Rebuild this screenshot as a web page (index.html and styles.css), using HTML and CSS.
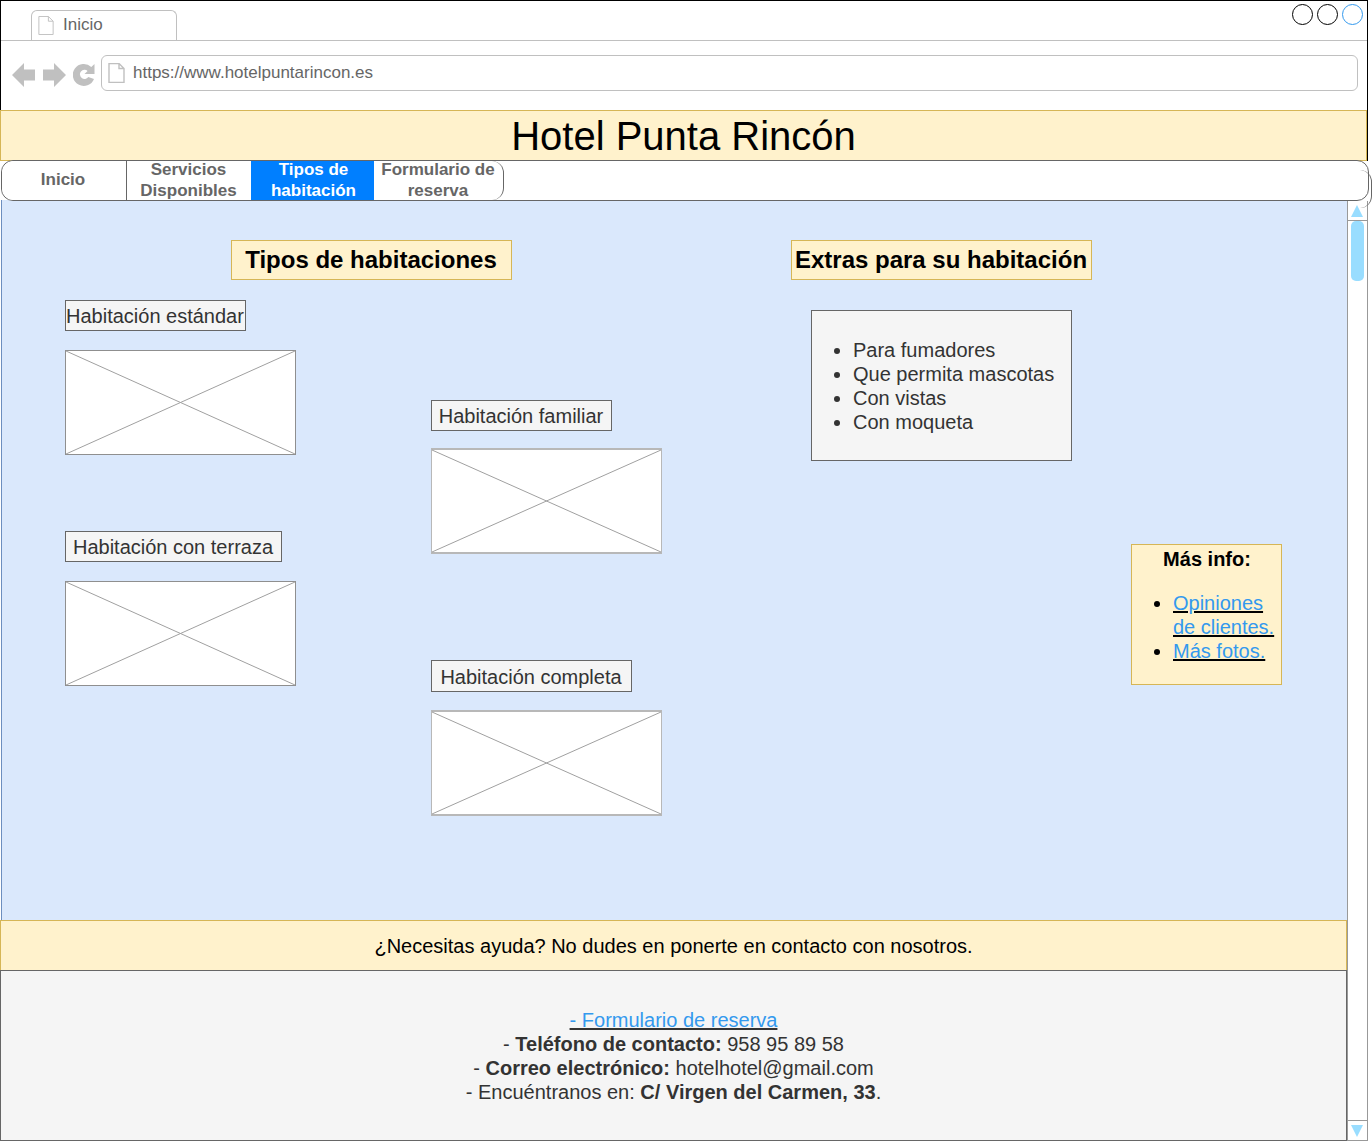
FILE: index.html
```html
<!DOCTYPE html>
<html lang="es">
<head>
<meta charset="utf-8">
<title>Hotel Punta Rincón</title>
<link rel="stylesheet" href="styles.css">
</head>
<body>
<div class="window">
  <div class="chrome">
    <div class="tabbar">
      <div class="tab">
        <svg class="page-icon" viewBox="0 0 16 20"><path d="M.5.5H10.5L15.5 5.5V19.5H.5Z M10.5.5V5.5H15.5"/></svg>
        <span class="tab-text">Inicio</span>
      </div>
      <div class="win-buttons">
        <span class="win-btn"></span><span class="win-btn"></span><span class="win-btn win-btn-active"></span>
      </div>
    </div>
    <div class="addressbar">
      <div class="nav-icons">
        <svg class="nav-icon" viewBox="0 0 23 24"><path d="M0 12L12 0V6.500H23V17.500H12V24Z"/></svg>
        <svg class="nav-icon" viewBox="0 0 23 24"><path d="M23 12L11 0V6.500H0V17.500H11V24Z"/></svg>
        <svg class="nav-icon nav-icon-reload" viewBox="0 0 22 23"><path d="M21.500 1V11H11.500L14.600 7.900A4.600 4.600 0 1 0 15.300 14L21 16A11 11 0 1 1 18.300 3.900Z"/></svg>
      </div>
      <div class="url">
        <svg class="page-icon url-icon" viewBox="0 0 16 20"><path d="M.5.5H10.5L15.5 5.5V19.5H.5Z M10.5.5V5.5H15.5"/></svg>
        <span>https://www.hotelpuntarincon.es</span>
      </div>
    </div>
  </div>
  <div class="title-row">
    <h1 class="title">Hotel Punta Rincón</h1>
  </div>
  <nav class="menu">
    <a class="menu-item menu-first">Inicio</a>
    <a class="menu-item menu-second">Servicios Disponibles</a>
    <a class="menu-item menu-active">Tipos de habitación</a>
    <a class="menu-item menu-last">Formulario de reserva</a>
  </nav>
  <div class="body-row">
    <div class="page">
      <main class="canvas">
        <h2 class="heading heading-rooms">Tipos de habitaciones</h2>
        <h2 class="heading heading-extras">Extras para su habitación</h2>
        <section class="rooms rooms-left">
          <div class="room room-a">
            <div class="room-label label-a">Habitación estándar</div>
            <svg class="placeholder" viewBox="0 0 230 104" preserveAspectRatio="none"><path d="M0 0L230 104M230 0L0 104"/></svg>
          </div>
          <div class="room room-b">
            <div class="room-label label-b">Habitación con terraza</div>
            <svg class="placeholder" viewBox="0 0 230 104" preserveAspectRatio="none"><path d="M0 0L230 104M230 0L0 104"/></svg>
          </div>
        </section>
        <section class="rooms rooms-right">
          <div class="room room-c">
            <div class="room-label label-c">Habitación familiar</div>
            <svg class="placeholder placeholder-soft" viewBox="0 0 230 104" preserveAspectRatio="none"><path d="M0 0L230 104M230 0L0 104"/></svg>
          </div>
          <div class="room room-d">
            <div class="room-label label-d">Habitación completa</div>
            <svg class="placeholder placeholder-soft" viewBox="0 0 230 104" preserveAspectRatio="none"><path d="M0 0L230 104M230 0L0 104"/></svg>
          </div>
        </section>
        <ul class="extras">
          <li>Para fumadores</li>
          <li>Que permita mascotas</li>
          <li>Con vistas</li>
          <li>Con moqueta</li>
        </ul>
        <aside class="info">
          <div class="info-title">Más info:</div>
          <ul class="info-list">
            <li><a class="link" href="#">Opiniones de clientes.</a></li>
            <li><a class="link" href="#">Más fotos.</a></li>
          </ul>
        </aside>
      </main>
      <div class="help">¿Necesitas ayuda? No dudes en ponerte en contacto con nosotros.</div>
      <footer class="footer">
        <div><a class="link" href="#">- Formulario de reserva</a></div>
        <div>- <b>Teléfono de contacto:</b> 958 95 89 58</div>
        <div>- <b>Correo electrónico:</b> hotelhotel@gmail.com</div>
        <div>- Encuéntranos en: <b>C/ Virgen del Carmen, 33</b>.</div>
      </footer>
    </div>
    <div class="scrollbar">
      <div class="scroll-btn scroll-up"><span class="tri-up"></span></div>
      <div class="scroll-track"><div class="scroll-thumb"></div></div>
      <div class="scroll-btn scroll-down"><span class="tri-down"></span></div>
    </div>
  </div>
</div>
</body>
</html>
```
FILE: styles.css
```css
* { box-sizing: border-box; }
html, body { margin: 0; padding: 0; background: #fff; }
body { font-family: "Liberation Sans", Arial, sans-serif; color: #333; }

.window {
  width: 1372px;
  height: 1141px;
  display: flex;
  flex-direction: column;
}

/* browser chrome */
.chrome {
  width: 1368px;
  flex: none;
  border: 1px solid #000;
  border-bottom: 0;
}
.tabbar {
  height: 40px;
  border-bottom: 1px solid #c0c0c0;
  display: flex;
  justify-content: space-between;
  padding-left: 30px;
}
.tab {
  width: 146px;
  height: 30px;
  margin-top: 9px;
  border: 1px solid #c0c0c0;
  border-bottom: 0;
  border-radius: 6px 6px 0 0;
  background: #fff;
  display: flex;
  align-items: center;
  gap: 9px;
  padding-left: 6px;
  font-size: 17px;
  color: #666;
}
.tab-text { margin-bottom: 2px; }
.page-icon { width: 16px; height: 19px; flex: none; }
.page-icon path { fill: #fff; stroke: #c0c0c0; stroke-width: 1; }
.win-buttons { display: flex; gap: 4px; padding: 3px 4px 0 0; align-items: flex-start; }
.win-btn { width: 21px; height: 21px; border: 1px solid #000; border-radius: 50%; }
.win-btn-active { border-color: #3399ee; }

.addressbar {
  height: 69px;
  display: flex;
  align-items: flex-start;
  padding: 14px 9px 0 11px;
}
.nav-icons { display: flex; gap: 8px; align-items: center; width: 89px; height: 36px; flex: none; padding-top: 3px; }
.nav-icon { width: 23px; height: 24px; fill: #c0c0c0; flex: none; }
.nav-icon-reload { width: 22px; height: 23px; margin-left: -1px; }
.url {
  flex: 1;
  height: 36px;
  border: 1px solid #c0c0c0;
  border-radius: 6px;
  display: flex;
  align-items: center;
  gap: 8px;
  padding-left: 6px;
  font-size: 17px;
  color: #666;
}
.url-icon { height: 20px; width: 17px; }
.url-icon path { fill: #fff; stroke: #c0c0c0; stroke-width: 1.4; }

.title-row {
  width: 1368px;
  flex: none;
  border-right: 1px solid #000;
}
.title {
  height: 51px;
  margin: 0;
  width: 1367px;
  background: #fff2cc;
  border: 1px solid #d6b656;
  font-weight: 400;
  font-size: 40px;
  line-height: 51px;
  color: #000;
  text-align: center;
}

.menu {
  height: 41px;
  margin: -1px 0 0 1px;
  flex: none;
  width: 1368px;
  background: #fff;
  border: 1px solid #666;
  border-radius: 12px;
  display: flex;
  position: relative;
  z-index: 1;
}
.menu::after {
  content: "";
  position: absolute;
  right: -4px;
  top: 9px;
  width: 12px;
  height: 38px;
  border-right: 1px solid #666;
  border-radius: 0 12px 12px 0;
  z-index: -1;
}
.menu-item {
  height: 39px;
  display: flex;
  align-items: center;
  justify-content: center;
  text-align: center;
  font-weight: 700;
  font-size: 17px;
  line-height: 21px;
  color: #666;
  background: #fff;
  padding: 0 6px 2px;
}
.menu-first { width: 125px; border-right: 1px solid #666; border-radius: 12px 0 0 12px; padding-right: 8px; }
.menu-second { width: 124px; padding-right: 7px; }
.menu-active { background: #007fff; color: #fff; width: 123px; padding: 0 5px 2px 7px; }
.menu-last { width: 130px; border-right: 1px solid #666; border-radius: 0 12px 12px 0; padding: 0 5px 2px 4px; }

/* page */
.body-row { flex: 1; min-height: 0; display: flex; margin-top: -1px; width: 1368px; }
.page { width: 1347px; flex: none; display: flex; flex-direction: column; }
.canvas {
  height: 720px;
  flex: none;
  background: #dae8fc;
  border-left: 1px solid #6c8ebf;
  margin-left: 1px;
  display: grid;
  grid-template-columns: 366px 360px 340px 1fr;
  grid-template-rows: 40px 1fr;
  padding: 40px 0 0 63px;
  color: #333;
}
.heading {
  margin: 0;
  height: 40px;
  background: #fff2cc;
  border: 1px solid #d6b656;
  color: #000;
  font-size: 24px;
  line-height: 38px;
  font-weight: 700;
  text-align: center;
  padding-right: 1px;
}
.heading-rooms { grid-column: 1 / 3; grid-row: 1; margin-left: 166px; width: 281px; }
.heading-extras { grid-column: 3 / 5; grid-row: 1; width: 301px; white-space: nowrap; }

.rooms { grid-row: 2; display: flex; flex-direction: column; }
.room-label {
  height: 31px;
  background: #f5f5f5;
  border: 1px solid #666;
  font-size: 20px;
  line-height: 31px;
  text-align: center;
  white-space: nowrap;
  padding-right: 1px;
}
.label-a { width: 181px; padding-right: 2px; }
.label-b { width: 217px; }
.label-c { width: 181px; }
.label-d { width: 201px; height: 32px; line-height: 33px; }
.placeholder { display: block; width: 231px; height: 105px; background: #fff; border: 1px solid #8f8f8f; overflow: visible; }
.placeholder path { fill: none; stroke: #a0a0a0; stroke-width: 1; vector-effect: non-scaling-stroke; }
.placeholder-soft { height: 106px; border: 1px solid #b8b8b8; border-width: 2px 1px; }
.room-a { margin-top: 20px; }
.room-a .placeholder { margin-top: 19px; }
.room-b { margin-top: 76px; }
.room-b .placeholder { margin-top: 19px; }
.room-c { margin-top: 120px; }
.room-c .placeholder { margin-top: 17px; }
.room-d { margin-top: 106px; }
.room-d .placeholder { margin-top: 18px; }

.extras {
  grid-column: 3;
  grid-row: 2;
  align-self: start;
  margin: 30px 0 0 20px;
  width: 261px;
  height: 151px;
  background: #f5f5f5;
  border: 1px solid #666;
  font-size: 20px;
  line-height: 24px;
  padding: 27px 0 0 41px;
}

.info {
  grid-column: 4;
  grid-row: 2;
  align-self: start;
  margin-top: 264px;
  width: 151px;
  height: 141px;
  background: #fff2cc;
  border: 1px solid #d6b656;
  color: #000;
  font-size: 20px;
  line-height: 24px;
  padding-top: 2px;
}
.info-title { font-weight: 700; text-align: center; padding-left: 1px; }
.info-list { margin: 20px 0 0; padding: 0 0 0 41px; }
.link { color: #3399ee; text-decoration: underline; text-decoration-color: #000; }

.help {
  height: 50px;
  flex: none;
  background: #fff2cc;
  border: 1px solid #d6b656;
  border-bottom: 0;
  color: #000;
  font-size: 20px;
  line-height: 50px;
  text-align: center;
}
.footer {
  flex: 1;
  background: #f5f5f5;
  border: 1px solid #666;
  text-align: center;
  font-size: 20px;
  line-height: 24px;
  padding-top: 37px;
}
.footer .link { text-decoration-color: #333; }

.scrollbar {
  width: 21px;
  flex: none;
  display: flex;
  flex-direction: column;
  border-left: 1px solid #999;
  border-right: 1px solid #999;
  border-bottom: 1px solid #999;
  margin-top: 1px;
  background: #fff;
}
.scroll-btn { height: 20px; display: flex; align-items: center; justify-content: center; flex: none; padding-right: 1px; }
.scroll-up { border-bottom: 1px solid #999; }
.scroll-down { border-top: 1px solid #999; }
.tri-up { width: 0; height: 0; border: 6px solid transparent; border-top: 0; border-bottom: 12px solid #99ddff; }
.tri-down { width: 0; height: 0; border: 6px solid transparent; border-bottom: 0; border-top: 12px solid #99ddff; }
.scroll-track { flex: 1; padding: 0 3px; }
.scroll-thumb { height: 60px; background: #99ddff; border-radius: 5px; }
```
